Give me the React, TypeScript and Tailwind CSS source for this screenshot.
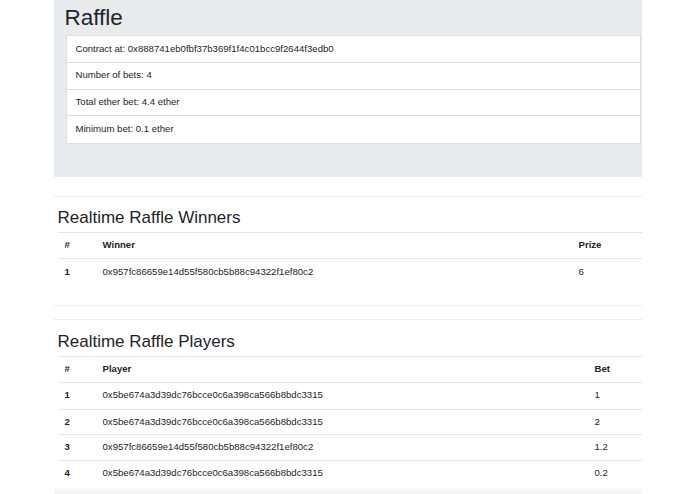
const info = [
  'Contract at: 0x888741eb0fbf37b369f1f4c01bcc9f2644f3edb0',
  'Number of bets: 4',
  'Total ether bet: 4.4 ether',
  'Minimum bet: 0.1 ether',
];

const winners = [{ addr: '0x957fc86659e14d55f580cb5b88c94322f1ef80c2', prize: '6' }];

const players = [
  { addr: '0x5be674a3d39dc76bcce0c6a398ca566b8bdc3315', bet: '1' },
  { addr: '0x5be674a3d39dc76bcce0c6a398ca566b8bdc3315', bet: '2' },
  { addr: '0x957fc86659e14d55f580cb5b88c94322f1ef80c2', bet: '1.2' },
  { addr: '0x5be674a3d39dc76bcce0c6a398ca566b8bdc3315', bet: '0.2' },
];

function Table({
  cols,
  head,
  rows,
}: {
  cols: string;
  head: string[];
  rows: string[][];
}) {
  return (
    <div className="border-t border-[#e3e6e9]">
      <div className={`grid ${cols} h-[26px] items-center font-bold border-b border-[#e3e6e9]`}>
        {head.map((h) => (
          <div key={h} className="pl-[7px]">
            {h}
          </div>
        ))}
      </div>
      {rows.map((r, i) => (
        <div
          key={i}
          className={`grid ${cols} h-[25.75px] items-center ${i > 0 ? 'border-t border-[#e3e6e9]' : ''}`}
        >
          <div className="pl-[7px] font-bold">{r[0]}</div>
          <div className="pl-[7px]">{r[1]}</div>
          <div className="pl-[7px]">{r[2]}</div>
        </div>
      ))}
    </div>
  );
}

export default function App() {
  return (
    <div className="min-h-screen bg-white text-[#212529] text-[9.6px] font-['Liberation_Sans',Arial,sans-serif]">
      <div className="w-[588px] mx-auto">
        {/* jumbotron */}
        <div className="bg-[#e9ecef] h-[177px] pl-[11px] pr-[1px]">
          <h1 className="h-[35px] pt-[4px] text-[22.5px] leading-[28px] font-normal">Raffle</h1>
          <div className="ml-[1px] bg-white border border-[#dcdfe3] divide-y divide-[#dcdfe3]">
            {info.map((t) => (
              <div key={t} className="h-[26.75px] flex items-center pl-[9px]">
                {t}
              </div>
            ))}
          </div>
        </div>

        <hr className="mt-[19px] border-0 border-t border-[#ececec]" />

        <div className="ml-[4px]">
          <h3 className="mt-[11px] mb-[4px] text-[17px] leading-[20px] font-medium">Realtime Raffle Winners</h3>
          <Table
            cols="grid-cols-[38px_1fr_70px]"
            head={['#', 'Winner', 'Prize']}
            rows={winners.map((w, i) => [String(i + 1), w.addr, w.prize])}
          />
        </div>

        <hr className="mt-[20px] border-0 border-t border-[#ececec]" />
        <hr className="mt-[13px] border-0 border-t border-[#ececec]" />

        <div className="ml-[4px]">
          <h3 className="mt-[12px] mb-[4px] text-[17px] leading-[20px] font-medium">Realtime Raffle Players</h3>
          <Table
            cols="grid-cols-[38px_1fr_54px]"
            head={['#', 'Player', 'Bet']}
            rows={players.map((p, i) => [String(i + 1), p.addr, p.bet])}
          />
        </div>

        <div className="h-[12px] bg-gradient-to-b from-white to-[#ebebeb]" />
      </div>
    </div>
  );
}
